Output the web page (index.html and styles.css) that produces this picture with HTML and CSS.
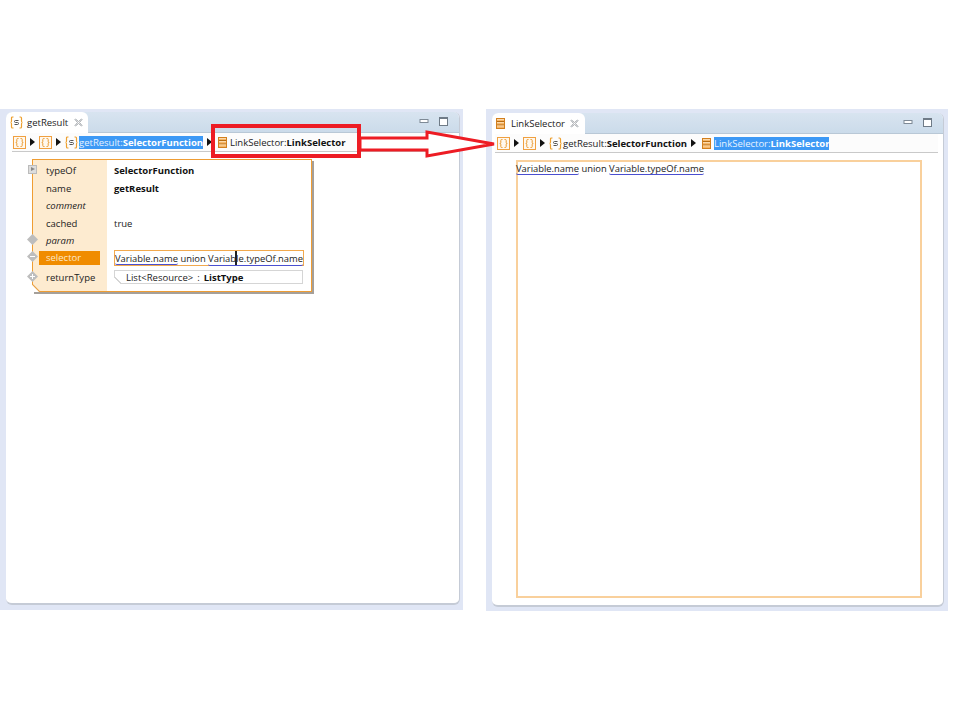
FILE: index.html
```html
<!DOCTYPE html>
<html lang="en">
<head>
<meta charset="utf-8">
<title>Editors</title>
<link rel="stylesheet" href="styles.css">
</head>
<body>
<svg class="defs" width="0" height="0" aria-hidden="true">
  <symbol id="i-block" viewBox="0 0 13 13">
    <rect x="0.5" y="0.5" width="12" height="12" fill="#fff8ee" stroke="#f0a040"/>
    <path d="M5.500 2.500H4.500Q3.800 2.500 3.800 3.500V5.500Q3.800 6.500 2.800 6.500Q3.800 6.500 3.800 7.500V9.500Q3.800 10.500 4.500 10.500H5.500M7.500 2.500H8.500Q9.200 2.500 9.200 3.500V5.500Q9.200 6.500 10.200 6.500Q9.200 6.500 9.200 7.500V9.500Q9.200 10.500 8.500 10.500H7.500" fill="none" stroke="#ea9a30"/>
  </symbol>
  <symbol id="i-fn" viewBox="0 0 13 13">
    <path d="M3.500 1H2.500Q1.500 1 1.500 2V5Q1.500 6.500 .5 6.500Q1.500 6.500 1.500 8V11Q1.500 12 2.500 12H3.500M9.500 1H10.500Q11.500 1 11.500 2V5Q11.500 6.500 12.500 6.500Q11.500 6.500 11.500 8V11Q11.500 12 10.500 12H9.500" fill="none" stroke="#eda030" stroke-width="1.200"/>
    <path d="M8.500 4.500H5.500Q4.500 4.500 4.500 5.500Q4.500 6.500 5.500 6.500H7.500Q8.500 6.500 8.500 7.500Q8.500 8.500 7.500 8.500H4.500" fill="none" stroke="#555"/>
  </symbol>
  <symbol id="i-table" viewBox="0 0 9 11">
    <rect x="0.500" y="0.500" width="8" height="10" fill="#f6b668" stroke="#d27f1e"/>
    <path d="M1 3.500H8M1 7H8" stroke="#b96d12"/>
    <path d="M1 1.500H8M1 4.500H8M1 8H8" stroke="#fbd9ab"/>
  </symbol>
  <symbol id="i-min" viewBox="0 0 11 11">
    <rect x="1" y="3.500" width="8" height="3" fill="#fff" stroke="#7e8a96"/>
  </symbol>
  <symbol id="i-max" viewBox="0 0 11 11">
    <rect x="1.500" y="1.500" width="8" height="8" fill="#fff" stroke="#6f7b87"/>
    <path d="M1.500 2.500H9.500" stroke="#6f7b87"/>
  </symbol>
  <symbol id="i-close" viewBox="0 0 9 9">
    <path d="M1.500 1 4.500 3.500 7.500 1 8 1.500 5.500 4.500 8 7.500 7.500 8 4.500 5.500 1.500 8 1 7.500 3.500 4.500 1 1.500Z" fill="#fff" stroke="#8f959a" stroke-width=".8"/>
  </symbol>
</svg>

<main class="stage">
  <section class="window window-left">
    <div class="panel">
      <header class="tabbar">
        <div class="tab tab-left">
          <svg class="ico"><use href="#i-fn"/></svg>
          <span>getResult</span>
          <svg class="ico-close"><use href="#i-close"/></svg>
        </div>
        <div class="win-ctrls">
          <svg class="ico-ctrl"><use href="#i-min"/></svg>
          <svg class="ico-ctrl"><use href="#i-max"/></svg>
        </div>
      </header>
      <nav class="crumbs crumbs-left">
        <svg class="ico"><use href="#i-block"/></svg><i class="sep"></i>
        <svg class="ico"><use href="#i-block"/></svg><i class="sep"></i>
        <svg class="ico"><use href="#i-fn"/></svg>
        <span class="crumb selected">getResult:<b>SelectorFunction</b></span><i class="sep"></i>
        <svg class="ico-table"><use href="#i-table"/></svg>
        <span class="crumb">LinkSelector:<b>LinkSelector</b></span>
      </nav>
      <div class="body-left">
        <div class="node">
          <div class="row"><span class="key">typeOf</span><b class="val">SelectorFunction</b></div>
          <div class="row"><span class="key">name</span><b class="val">getResult</b></div>
          <div class="row"><em class="key">comment</em></div>
          <div class="row"><span class="key">cached</span><span class="val">true</span></div>
          <div class="row"><em class="key">param</em></div>
          <div class="row row-sel">
            <span class="key key-on">selector</span>
            <span class="field">
              <span class="lnk">Variable.name</span> union <span class="lnk">Variab<i class="caret"></i>le.typeOf.name</span>
            </span>
          </div>
          <div class="row row-ret">
            <span class="key">returnType</span>
            <span class="ref"><span>List&lt;Resource&gt;</span><span class="colon">:</span><b>ListType</b></span>
          </div>
          <i class="handle h-type"></i>
          <i class="dot d-param"></i>
          <i class="dot d-sel"></i>
          <i class="dot d-ret"></i>
          <svg class="chamfer" width="8" height="8" viewBox="0 0 8 8"><path d="M0 0V8H8Z" fill="#fff"/><path d="M0 0 8 8" stroke="#e9a043" stroke-width="1.200"/></svg>
        </div>
      </div>
    </div>
  </section>

  <section class="window window-right">
    <div class="panel">
      <header class="tabbar">
        <div class="tab tab-right">
          <svg class="ico-table"><use href="#i-table"/></svg>
          <span>LinkSelector</span>
          <svg class="ico-close"><use href="#i-close"/></svg>
        </div>
        <div class="win-ctrls">
          <svg class="ico-ctrl"><use href="#i-min"/></svg>
          <svg class="ico-ctrl"><use href="#i-max"/></svg>
        </div>
      </header>
      <nav class="crumbs crumbs-right">
        <svg class="ico"><use href="#i-block"/></svg><i class="sep"></i>
        <svg class="ico"><use href="#i-block"/></svg><i class="sep"></i>
        <svg class="ico"><use href="#i-fn"/></svg>
        <span class="crumb">getResult:<b>SelectorFunction</b></span><i class="sep"></i>
        <svg class="ico-table"><use href="#i-table"/></svg>
        <span class="crumb selected">LinkSelector:<b>LinkSelector</b></span>
      </nav>
      <div class="body-right">
        <div class="canvas">
          <div class="canvas-text"><span class="lnk">Variable.name</span> union <span class="lnk">Variable.typeOf.name</span></div>
        </div>
      </div>
    </div>
  </section>

  <div class="callout"></div>
  <svg class="arrow" width="140" height="30" viewBox="0 0 140 30">
    <path d="M1 9H68V3L135 15 68 27V21H1Z" fill="#fff" stroke="#ed1c24" stroke-width="3"/>
  </svg>
</main>
</body>
</html>
```
FILE: styles.css
```css
* { box-sizing: border-box; }
html, body { margin: 0; height: 100%; background: #fff; }
body {
  font-family: "Open Sans", "Noto Sans", sans-serif;
  font-size: 9.5px;
  color: #222;
  overflow: hidden;
}
b { font-weight: 700; color: #111; }
em { font-style: italic; }
.defs { position: absolute; }

.stage {
  position: relative;
  display: flex;
  align-items: flex-start;
  gap: 23px;
  padding-top: 109px;
  width: 960px;
  height: 720px;
}
.window {
  background: #e0e6f5;
}
.window-left { width: 463px; height: 501px; padding: 3px 3px 5px 6px; }
.window-right { width: 462px; height: 502px; padding: 4px 4px 4px 6px; }

.panel {
  height: 100%;
  background: #fff;
  border-radius: 6px;
  border-right: 1px solid #c5cbd6;
  border-bottom: 2px solid #c5cbd6;
  display: flex;
  flex-direction: column;
  overflow: hidden;
}

.tabbar {
  height: 21px;
  flex: none;
  display: flex;
  justify-content: space-between;
  background: linear-gradient(#d8e4f0, #cbdbea);
  border-bottom: 1px solid #b9c8d6;
}
.tab {
  display: flex;
  align-items: center;
  background: #fff;
  border-radius: 6px 6px 0 0;
  height: 21px;
  padding-left: 4px;
  font-size: 9.5px;
}
.tab-left { width: 82px; gap: 4px; }
.tab-right { width: 93px; gap: 6px; }
.ico-close { width: 9px; height: 9px; margin-left: 2px; }
.tab-right .ico-close { margin-left: -1px; }
.win-ctrls {
  display: flex;
  gap: 8px;
  padding: 4px 10px 0 0;
}
.ico-ctrl { width: 11px; height: 11px; }

.ico { width: 13px; height: 13px; flex: none; }
.ico-table { width: 9px; height: 11px; flex: none; }
.crumbs .ico-table { margin-left: 2px; }

.crumbs {
  height: 19px;
  flex: none;
  display: flex;
  align-items: center;
  border-bottom: 1px solid #c9c9c9;
  background: #fcfcfc;
  font-size: 9.5px;
  white-space: nowrap;
}
.crumbs-left { margin: 0 6px; padding-left: 1px; }
.crumbs-right { margin: 0 5px 0 3px; padding-left: 2px; }
.sep {
  width: 0;
  height: 0;
  margin: 0 4px;
  border-left: 5px solid #111;
  border-top: 4px solid transparent;
  border-bottom: 4px solid transparent;
}
.crumb { margin-left: 1px; line-height: 13px; }
.ico-table + .crumb { margin-left: 3px; }
.selected { background: #3d99f5; color: #e8f3ff; }
.selected b { color: #fff; }

.body-left { flex: 1; padding: 7px 0 0 26px; }
.node {
  position: relative;
  width: 280px;
  height: 133px;
  padding: 2px 8px 0 6px;
  border: 1px solid #ef9d33;
  box-shadow: 2px 2px 0 #a5a09a;
  background: linear-gradient(90deg, #fdebd0 74px, #fff 74px);
}
.row {
  display: flex;
  align-items: center;
  height: 17.500px;
  font-size: 9.5px;
}
.key { width: 75px; padding-left: 7px; flex: none; }
.key-on {
  width: 61px;
  margin-right: 14px;
  height: 14px;
  line-height: 14px;
  background: #f08c00;
  color: #fde9c8;
}
.val { white-space: nowrap; }
.row-sel { height: 18px; margin-top: -1px; }
.row-ret { height: 21px; }
.field {
  position: relative;
  width: 190px;
  height: 16px;
  line-height: 14px;
  border: 1px solid #f1a94e;
  font-size: 9.4px;
  white-space: nowrap;
}
.ref {
  position: relative;
  width: 190px;
  height: 14px;
  display: flex;
  align-items: center;
  gap: 4px;
  padding-left: 11px;
  border: 1px solid #d5d5d5;
  white-space: nowrap;
}
.ref::before {
  content: "";
  position: absolute;
  left: -1px;
  bottom: -1px;
  width: 7px;
  height: 7px;
  background: linear-gradient(to top right, #fff 45%, #d5d5d5 45%, #d5d5d5 58%, transparent 58%);
}
.lnk { border-bottom: 1px solid #4a4fd0; border-radius: 0 0 2px 2px; color: #222; display: inline-block; line-height: 11px; }
.caret {
  display: inline-block;
  width: 2px;
  height: 14px;
  margin-left: -1px;
  margin-right: -1px;
  vertical-align: -3px;
  background: #222;
}
.handle {
  position: absolute;
  left: -5px;
  top: 5px;
  width: 9px;
  height: 9px;
  background: #ddd;
  border: 1px solid #bbb;
}
.handle::after {
  content: "";
  position: absolute;
  left: 2px;
  top: 1px;
  border-left: 4px solid #888;
  border-top: 2.500px solid transparent;
  border-bottom: 2.500px solid transparent;
}
.dot {
  position: absolute;
  left: -6px;
  width: 11px;
  height: 11px;
  background-color: #bdbdbd;
  background-repeat: no-repeat;
  background-position: center;
  clip-path: polygon(50% 0, 100% 50%, 50% 100%, 0 50%);
}
.d-param { top: 74px; }
.d-sel {
  top: 91px;
  background-image: linear-gradient(#fff, #fff);
  background-size: 5px 1px;
}
.d-ret {
  top: 111px;
  background-image: linear-gradient(#fff, #fff), linear-gradient(#fff, #fff);
  background-size: 5px 1px, 1px 5px;
}
.chamfer { position: absolute; left: -1px; bottom: -1px; }

.body-right { flex: 1; display: flex; padding: 7px 21px 7px 24px; }
.canvas {
  flex: 1;
  border: 2px solid #f9d09c;
  font-size: 9.4px;
  line-height: 13px;
}
.canvas-text { margin-left: -2px; }

.callout {
  position: absolute;
  left: 211px;
  top: 124px;
  width: 150px;
  height: 34px;
  border: 4px solid #ed1c24;
}
.arrow {
  position: absolute;
  left: 359px;
  top: 129px;
}
```
